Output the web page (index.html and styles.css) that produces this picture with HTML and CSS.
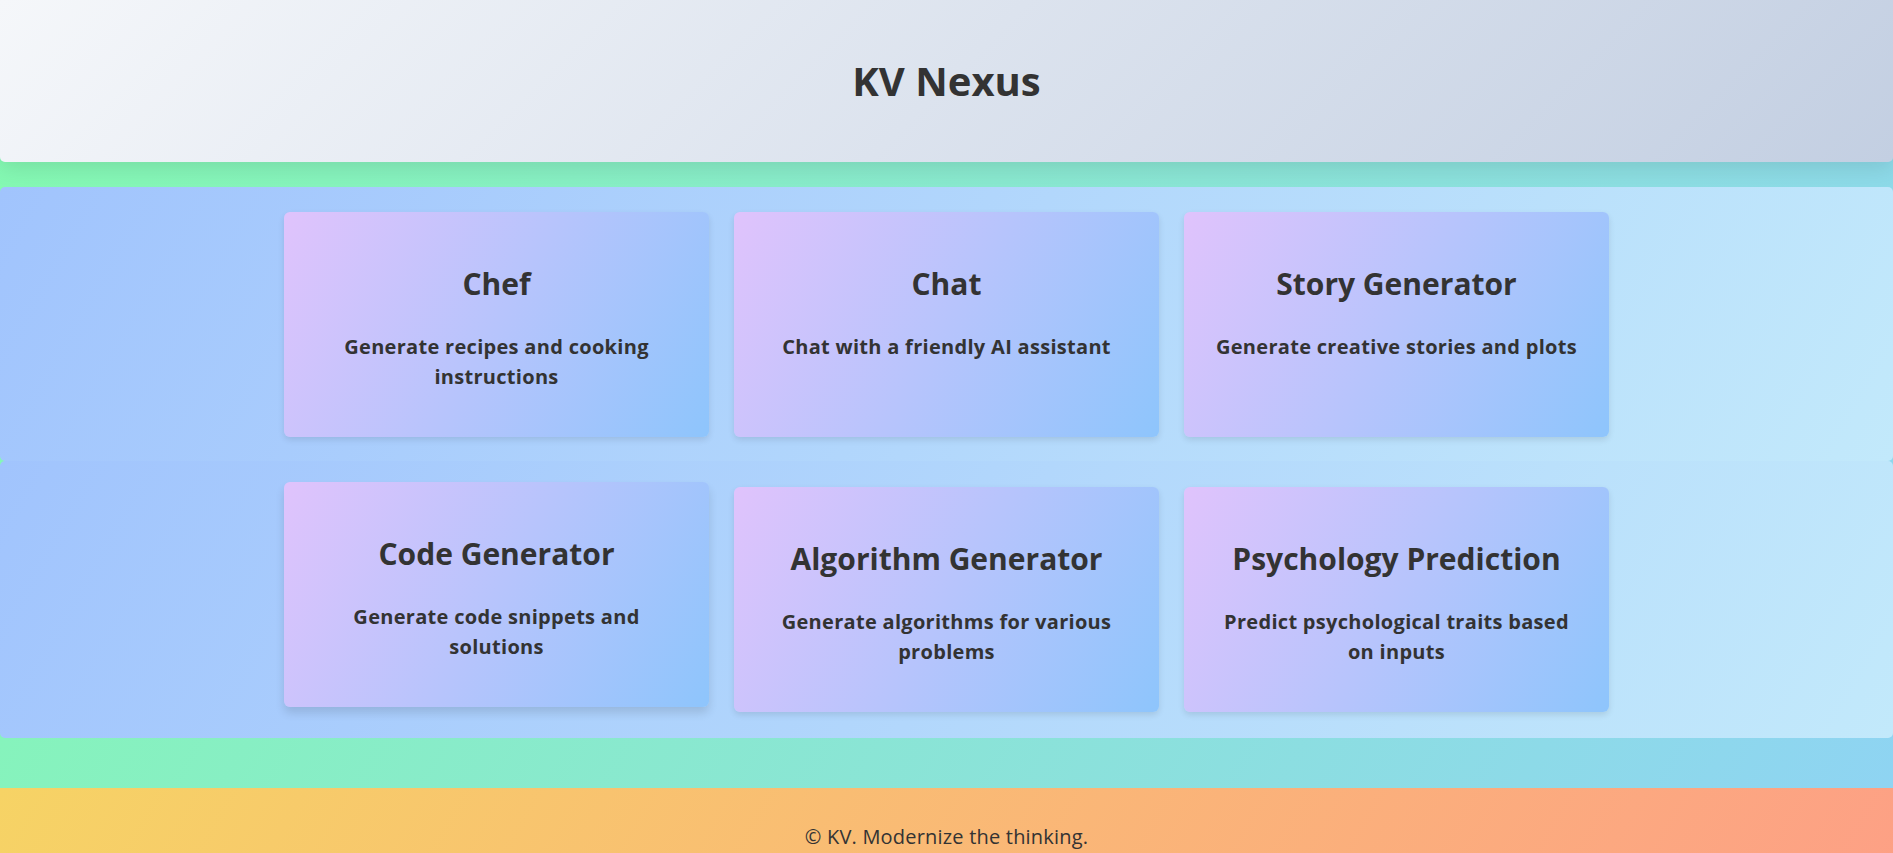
FILE: index.html
```html
<!DOCTYPE html>
<html lang="en">
<head>
<meta charset="utf-8">
<title>KV Nexus</title>
<link rel="stylesheet" href="styles.css">
</head>
<body>
<header class="site-header">
  <h1 class="site-title">KV Nexus</h1>
</header>
<main class="content">
  <section class="tool-row">
    <div class="tool-card">
      <h2 class="tool-name">Chef</h2>
      <p class="tool-desc">Generate recipes and cooking instructions</p>
    </div>
    <div class="tool-card">
      <h2 class="tool-name">Chat</h2>
      <p class="tool-desc">Chat with a friendly AI assistant</p>
    </div>
    <div class="tool-card">
      <h2 class="tool-name">Story Generator</h2>
      <p class="tool-desc">Generate creative stories and plots</p>
    </div>
  </section>
  <section class="tool-row tool-row-last">
    <div class="tool-card is-hovered">
      <h2 class="tool-name">Code Generator</h2>
      <p class="tool-desc">Generate code snippets and solutions</p>
    </div>
    <div class="tool-card">
      <h2 class="tool-name">Algorithm Generator</h2>
      <p class="tool-desc">Generate algorithms for various problems</p>
    </div>
    <div class="tool-card">
      <h2 class="tool-name">Psychology Prediction</h2>
      <p class="tool-desc">Predict psychological traits based on inputs</p>
    </div>
  </section>
</main>
<footer class="site-footer">
  <p class="footer-text">&copy; KV. Modernize the thinking.</p>
</footer>
</body>
</html>
```

FILE: styles.css
```css
* {
  box-sizing: border-box;
}

html, body {
  margin: 0;
  padding: 0;
}

body {
  font-family: "Open Sans", "Liberation Sans", sans-serif;
  color: #333;
  background: linear-gradient(120deg, #84fab0 0%, #8fd3f4 100%);
  min-height: 100vh;
}

.site-header {
  height: 162px;
  display: flex;
  align-items: center;
  justify-content: center;
  background: linear-gradient(135deg, #f5f7fa 0%, #c3cfe2 100%);
  border-radius: 0 0 5px 5px;
  box-shadow: 0 6px 22px rgba(0, 0, 0, 0.1);
  position: relative;
  z-index: 1;
}

.site-title {
  margin: 0;
  font-size: 40px;
  font-weight: 700;
  line-height: 1.2;
}

.content {
  margin: 25px 0 50px;
  display: flex;
  flex-direction: column;
}

.tool-row {
  display: grid;
  grid-template-columns: repeat(3, 425px);
  justify-content: center;
  column-gap: 25px;
  padding: 25px 0 24px;
  background: linear-gradient(120deg, #a1c4fd 0%, #c2e9fb 100%);
  border-radius: 5px;
}

.tool-row-last {
  padding: 26px 0;
}

.tool-card {
  padding: 54px 28px 45px;
  text-align: center;
  border-radius: 6px;
  background: linear-gradient(120deg, #e0c3fc 0%, #8ec5fc 100%);
  box-shadow: 0 3px 6px rgba(0, 0, 0, 0.1);
}

.tool-card.is-hovered {
  transform: translateY(-5px);
  box-shadow: 0 6px 10px rgba(0, 0, 0, 0.12);
}

.tool-name {
  margin: 0 0 30px;
  font-size: 30px;
  font-weight: 700;
  line-height: 36px;
}

.tool-desc {
  margin: 0;
  font-size: 20px;
  font-weight: 700;
  letter-spacing: 0.3px;
  line-height: 30px;
}

.site-footer {
  padding: 20px;
  text-align: center;
  background: linear-gradient(120deg, #f6d365 0%, #fda085 100%);
}

.footer-text {
  margin: 14px 0;
  font-size: 20px;
  letter-spacing: 0.2px;
  line-height: 1.5;
}
```
